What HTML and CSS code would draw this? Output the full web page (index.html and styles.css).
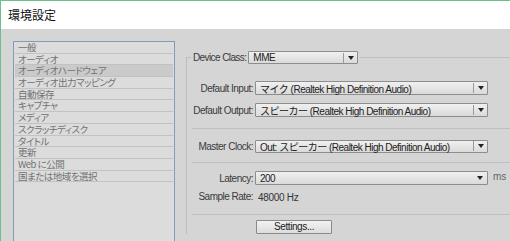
FILE: index.html
```html
<!DOCTYPE html>
<html lang="ja">
<head>
  <meta charset="UTF-8">
  <title>環境設定</title>
  <link rel="stylesheet" href="styles.css">
</head>
<body>
  <div class="window">
    <div class="titlebar">環境設定</div>
    <div class="content">
      <ul class="sidebar">
        <li>一般</li>
        <li>オーディオ</li>
        <li class="selected">オーディオハードウェア</li>
        <li>オーディオ出力マッピング</li>
        <li>自動保存</li>
        <li>キャプチャ</li>
        <li>メディア</li>
        <li>スクラッチディスク</li>
        <li>タイトル</li>
        <li>更新</li>
        <li>Web に公開</li>
        <li>国または地域を選択</li>
      </ul>

      <div class="main">
        <fieldset class="group">
          <legend class="legend">
            <span class="legend-label">Device Class:</span>
            <span class="combo combo-small"><span class="combo-text">MME</span><span class="combo-btn"><span class="arrow"></span></span></span>
          </legend>

          <div class="row row-input">
            <span class="label">Default Input:</span>
            <span class="combo"><span class="combo-text">マイク (Realtek High Definition Audio)</span><span class="combo-btn"><span class="arrow"></span></span></span>
          </div>
          <div class="row row-output">
            <span class="label">Default Output:</span>
            <span class="combo"><span class="combo-text">スピーカー (Realtek High Definition Audio)</span><span class="combo-btn"><span class="arrow"></span></span></span>
          </div>

          <div class="divider divider-one"></div>

          <div class="row row-clock">
            <span class="label">Master Clock:</span>
            <span class="combo"><span class="combo-text">Out: スピーカー (Realtek High Definition Audio)</span><span class="combo-btn"><span class="arrow"></span></span></span>
          </div>

          <div class="divider divider-two"></div>

          <div class="row row-latency">
            <span class="label">Latency:</span>
            <span class="combo combo-edit"><span class="combo-text">200</span><span class="combo-btn"><span class="arrow"></span></span></span>
            <span class="unit">ms</span>
          </div>
          <div class="row row-rate">
            <span class="label">Sample Rate:</span>
            <span class="value">48000 Hz</span>
          </div>

          <div class="divider divider-three"></div>

          <div class="row row-button">
            <button class="button" type="button">Settings...</button>
          </div>
        </fieldset>
      </div>
    </div>
  </div>
</body>
</html>
```
FILE: styles.css
```css
/* General */
* {
  box-sizing: border-box;
}

body {
  margin: 0;
  width: 510px;
  height: 241px;
  overflow: hidden;
  font-family: "Liberation Sans", "Noto Sans CJK JP", sans-serif;
  background-color: #d5d5d5;
}

.window {
  height: 241px;
  border-left: 1px solid #6cc18b;
  border-top: 1px solid #6cc18b;
  overflow: hidden;
}

.titlebar {
  height: 28px;
  line-height: 28px;
  padding-left: 7px;
  background-color: #ffffff;
  font-family: "Noto Sans CJK JP", sans-serif;
  font-size: 12px;
  color: #111;
}

.content {
  display: flex;
  padding: 12px 0 0 12px;
  height: 212px;
  background-color: #d5d5d5;
}

/* Sidebar list */
.sidebar {
  list-style: none;
  margin: 0;
  padding: 0 1px;
  width: 162px;
  height: 230px;
  flex-shrink: 0;
  border: 1px solid #7f9dbb;
  background-color: #dcdcdc;
}

.sidebar li {
  height: 11.7px;
  line-height: 11px;
  padding-left: 3px;
  border-bottom: 1px solid #c2c2c2;
  font-family: "Noto Sans CJK JP", sans-serif;
  font-feature-settings: "palt";
  font-size: 9.5px;
  letter-spacing: -0.5px;
  color: #727272;
  white-space: nowrap;
}

.sidebar li.selected {
  background-color: #cacaca;
}

/* Main panel */
.main {
  flex: 1;
  margin-left: 11px;
  margin-top: 10px;
}

.group {
  margin: 0;
  padding: 0;
  border: none;
  border-top: 1px solid #bfbfbf;
  border-left: 1px solid #bfbfbf;
  min-width: 0;
}

.legend {
  display: flex;
  align-items: center;
  height: 13px;
  margin-left: 4px;
  padding: 0 2px;
}

.legend-label {
  font-size: 10px;
  letter-spacing: -0.6px;
  color: #3a3a3a;
  margin-right: 2px;
}

.row {
  display: flex;
  align-items: center;
  height: 14px;
}

.row-input {
  margin-top: 17px;
}

.row-output {
  margin-top: 8px;
}

.row-clock {
  margin-top: 10px;
}

.row-latency {
  margin-top: 8px;
}

.row-rate {
  margin-top: 4px;
}

.row-button {
  margin-top: 5px;
  padding-left: 69px;
}

.label {
  width: 66px;
  text-align: right;
  margin-right: 2px;
  font-size: 10px;
  letter-spacing: -0.5px;
  color: #3a3a3a;
  white-space: nowrap;
}

/* Combo boxes */
.combo {
  display: flex;
  align-items: center;
  width: 233px;
  height: 14px;
  border: 1px solid #8d8d8d;
  border-radius: 1px;
  background: linear-gradient(#f0f0f0, #dadada);
}

.row-clock .combo {
  height: 13px;
}

.combo-small {
  width: 110px;
  height: 13px;
}

.combo-text {
  flex: 1;
  padding-left: 4px;
  font-size: 10px;
  letter-spacing: -0.5px;
  color: #222;
  white-space: nowrap;
  overflow: hidden;
}

.combo-btn {
  width: 14px;
  height: 10px;
  display: flex;
  align-items: center;
  justify-content: center;
  border-left: 1px solid #9a9a9a;
}

.combo-edit .combo-btn {
  border-left: none;
}

.arrow {
  width: 0;
  height: 0;
  border-left: 3px solid transparent;
  border-right: 3px solid transparent;
  border-top: 4px solid #222;
}

.unit {
  margin-left: 5px;
  margin-top: -4px;
  font-size: 10px;
  color: #666;
}

.value {
  margin-left: 3px;
  margin-top: 3px;
  font-size: 10px;
  letter-spacing: -0.3px;
  color: #333;
}

/* Dividers */
.divider {
  margin-left: 5px;
  border-top: 1px solid #bfbfbf;
}

.divider-one {
  margin-top: 11px;
}

.divider-two {
  margin-top: 9px;
}

.divider-three {
  margin-top: 11px;
}

.button {
  width: 76px;
  height: 14px;
  padding: 0;
  border: 1px solid #8a8a8a;
  border-radius: 1px;
  background: linear-gradient(#f2f2f2, #dcdcdc);
  font-family: "Liberation Sans", sans-serif;
  font-size: 10px;
  letter-spacing: -0.4px;
  line-height: 12px;
  color: #222;
}
```
